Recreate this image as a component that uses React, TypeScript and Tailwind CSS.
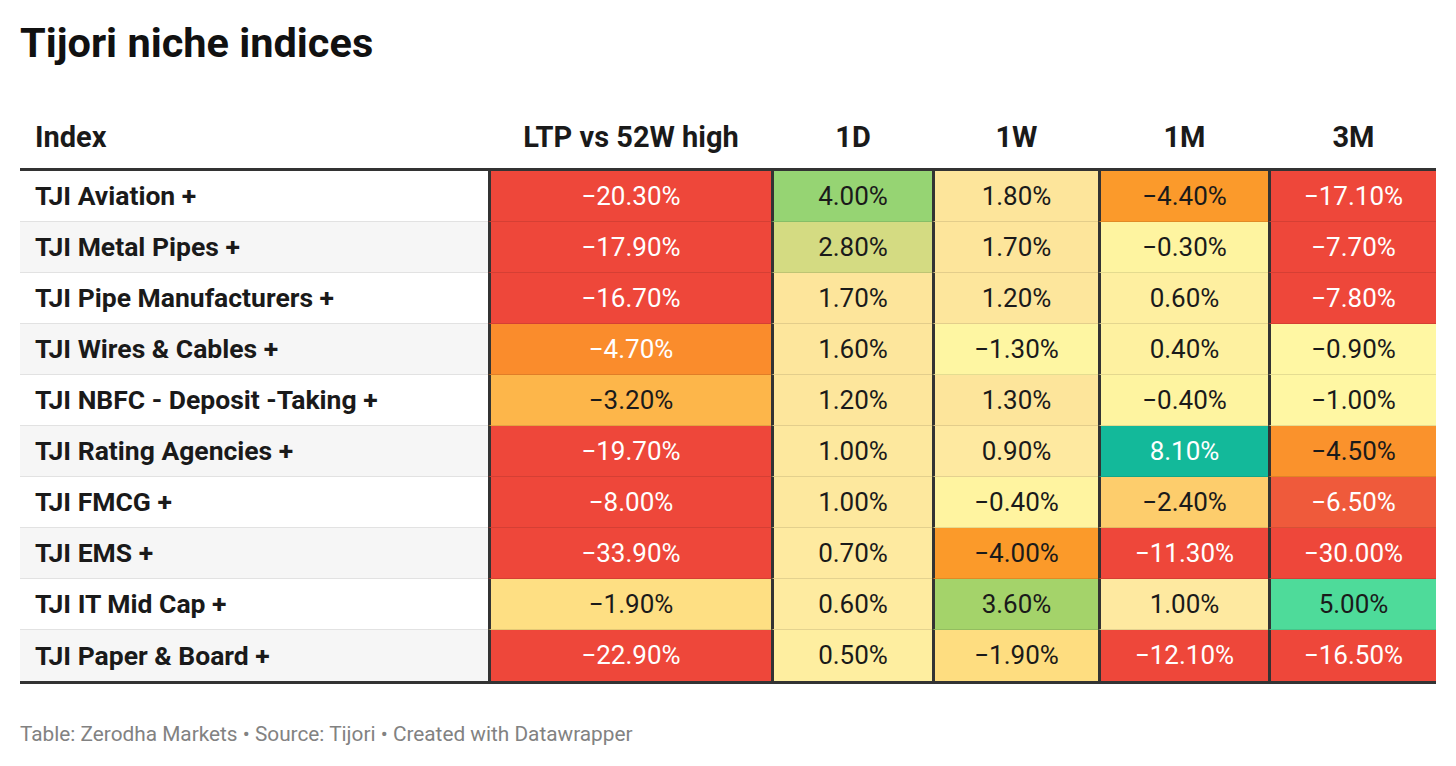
import React from "react";

type Cell = { v: string; bg: string; w?: boolean };
type Row = { name: string; cells: Cell[] };

const R = "#ee473a";

const rows: Row[] = [
  { name: "TJI Aviation +", cells: [
    { v: "−20.30%", bg: R, w: true },
    { v: "4.00%", bg: "#96d473" },
    { v: "1.80%", bg: "#fde59b" },
    { v: "−4.40%", bg: "#fb9a2b" },
    { v: "−17.10%", bg: R, w: true },
  ] },
  { name: "TJI Metal Pipes +", cells: [
    { v: "−17.90%", bg: R, w: true },
    { v: "2.80%", bg: "#d4db82" },
    { v: "1.70%", bg: "#fde59b" },
    { v: "−0.30%", bg: "#fef4a0" },
    { v: "−7.70%", bg: R, w: true },
  ] },
  { name: "TJI Pipe Manufacturers +", cells: [
    { v: "−16.70%", bg: R, w: true },
    { v: "1.70%", bg: "#fde59b" },
    { v: "1.20%", bg: "#fde69c" },
    { v: "0.60%", bg: "#feefa0" },
    { v: "−7.80%", bg: R, w: true },
  ] },
  { name: "TJI Wires & Cables +", cells: [
    { v: "−4.70%", bg: "#fa8c2c", w: true },
    { v: "1.60%", bg: "#fde69c" },
    { v: "−1.30%", bg: "#fef6a2" },
    { v: "0.40%", bg: "#fef1a0" },
    { v: "−0.90%", bg: "#fff7a3" },
  ] },
  { name: "TJI NBFC - Deposit -Taking +", cells: [
    { v: "−3.20%", bg: "#fdb64a" },
    { v: "1.20%", bg: "#fde69c" },
    { v: "1.30%", bg: "#fde59b" },
    { v: "−0.40%", bg: "#fef4a0" },
    { v: "−1.00%", bg: "#fff7a3" },
  ] },
  { name: "TJI Rating Agencies +", cells: [
    { v: "−19.70%", bg: R, w: true },
    { v: "1.00%", bg: "#fde89e" },
    { v: "0.90%", bg: "#fee9a0" },
    { v: "8.10%", bg: "#13b99a", w: true },
    { v: "−4.50%", bg: "#fa922c" },
  ] },
  { name: "TJI FMCG +", cells: [
    { v: "−8.00%", bg: R, w: true },
    { v: "1.00%", bg: "#fde89e" },
    { v: "−0.40%", bg: "#fff4a0" },
    { v: "−2.40%", bg: "#fdcd6c" },
    { v: "−6.50%", bg: "#ef5a3b", w: true },
  ] },
  { name: "TJI EMS +", cells: [
    { v: "−33.90%", bg: R, w: true },
    { v: "0.70%", bg: "#feeaa0" },
    { v: "−4.00%", bg: "#fb9a2a" },
    { v: "−11.30%", bg: R, w: true },
    { v: "−30.00%", bg: R, w: true },
  ] },
  { name: "TJI IT Mid Cap +", cells: [
    { v: "−1.90%", bg: "#fedf83" },
    { v: "0.60%", bg: "#feeba0" },
    { v: "3.60%", bg: "#a4d36a" },
    { v: "1.00%", bg: "#fee9a0" },
    { v: "5.00%", bg: "#4edb9a" },
  ] },
  { name: "TJI Paper & Board +", cells: [
    { v: "−22.90%", bg: R, w: true },
    { v: "0.50%", bg: "#feeea0" },
    { v: "−1.90%", bg: "#fedd80" },
    { v: "−12.10%", bg: R, w: true },
    { v: "−16.50%", bg: R, w: true },
  ] },
];

const headers = ["LTP vs 52W high", "1D", "1W", "1M", "3M"];

export default function App() {
  return (
    <div className="w-[1456px] h-[766px] bg-white font-['Roboto',sans-serif] pl-[20px] pt-[19px] text-[#1a1a1a]">
      <h1 className="text-[41.5px] leading-[48px] font-bold text-[#111]">Tijori niche indices</h1>
      <div className="mt-[53px] w-[1416px]">
        <div className="grid grid-cols-[468px_283px_161px_166px_170px_168px] h-[51px] border-b-[3px] border-[#333] box-border">
          <div className="flex items-end pb-[14px] pl-[15px] text-[29px] leading-[34px] font-bold">Index</div>
          {headers.map((h) => (
            <div key={h} className="flex items-end justify-center pl-[3px] pb-[14px] text-[29px] leading-[34px] font-bold">
              {h}
            </div>
          ))}
        </div>
        <div className="border-b-[3px] border-[#333]">
          {rows.map((r, i) => (
            <div
              key={r.name}
              className="grid grid-cols-[468px_283px_161px_166px_170px_168px] h-[51px]"
            >
              <div
                className={`flex items-center pl-[15px] text-[26.5px] font-bold box-border ${
                  i % 2 === 1 ? "bg-[#f6f6f6]" : "bg-white"
                } ${i < rows.length - 1 ? "border-b border-b-[#e2e2e2]" : ""}`}
              >
                {r.name}
              </div>
              {r.cells.map((c, j) => (
                <div
                  key={j}
                  style={{ backgroundColor: c.bg }}
                  className={`flex items-center justify-center border-l-[3px] border-l-[#333] box-border text-[26px] ${
                    c.w ? "text-white" : "text-[#1a1a1a]"
                  } ${i < rows.length - 1 ? "border-b border-b-[#0000001a]" : ""}`}
                >
                  {c.v}
                </div>
              ))}
            </div>
          ))}
        </div>
      </div>
      <div className="mt-[38px] text-[20.8px] leading-[24px] text-[#828282]">
        Table: Zerodha Markets • Source: Tijori • Created with Datawrapper
      </div>
    </div>
  );
}
